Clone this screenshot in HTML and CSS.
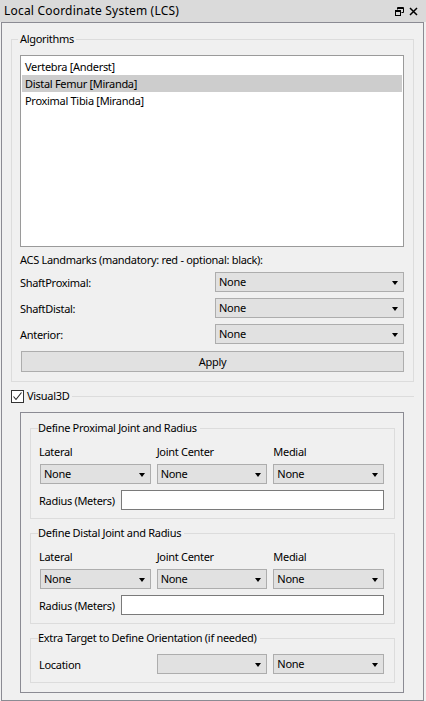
FILE: index.html
```html
<!DOCTYPE html>
<html lang="en">
<head>
<meta charset="UTF-8" />
<title>Local Coordinate System (LCS)</title>
<link rel="stylesheet" href="styles.css">
</head>
<body>
<div class="titlebar">
  <span class="title">Local Coordinate System (LCS)</span>
  <span class="title-buttons">
    <svg class="tb-icon" width="9" height="9" viewBox="0 0 9 9">
      <path d="M2.5 0.5h6v5h-2 M2.5 0.5v2 M2.5 1.5h6" fill="none" stroke="#000" stroke-width="1"/>
      <rect x="0.5" y="3.5" width="5" height="5" fill="none" stroke="#000"/>
      <path d="M0.5 4.5h5" stroke="#000"/>
    </svg>
    <svg class="tb-icon" width="9" height="9" viewBox="0 0 9 9">
      <path d="M1 1L8 8M8 1L1 8" stroke="#000" stroke-width="1.5"/>
    </svg>
  </span>
</div>

<div class="dock">
  <fieldset class="group algorithms">
    <legend>Algorithms</legend>
    <div class="list">
      <div class="list-item">Vertebra [Anderst]</div>
      <div class="list-item selected">Distal Femur [Miranda]</div>
      <div class="list-item">Proximal Tibia [Miranda]</div>
    </div>
    <div class="acs-label">ACS Landmarks (mandatory: red - optional: black):</div>
    <div class="landmark-row">
      <span class="row-label">ShaftProximal:</span>
      <div class="combo wide">None</div>
    </div>
    <div class="landmark-row">
      <span class="row-label">ShaftDistal:</span>
      <div class="combo wide">None</div>
    </div>
    <div class="landmark-row">
      <span class="row-label">Anterior:</span>
      <div class="combo wide">None</div>
    </div>
    <div class="button">Apply</div>
  </fieldset>

  <fieldset class="visual3d">
    <legend>
      <span class="checkbox">
        <svg width="11" height="11" viewBox="0 0 11 11">
          <path d="M1.5 5.5L4 8.5L9.5 1.5" fill="none" stroke="#222" stroke-width="1.1"/>
        </svg>
      </span>
      <span>Visual3D</span>
    </legend>
    <div class="box">
      <fieldset class="group sub">
        <legend>Define Proximal Joint and Radius</legend>
        <div class="cols labels">
          <span>Lateral</span><span>Joint Center</span><span>Medial</span>
        </div>
        <div class="cols">
          <div class="combo">None</div><div class="combo">None</div><div class="combo">None</div>
        </div>
        <div class="radius-row">
          <span class="radius-label">Radius (Meters)</span>
          <div class="input"></div>
        </div>
      </fieldset>

      <fieldset class="group sub">
        <legend>Define Distal Joint and Radius</legend>
        <div class="cols labels">
          <span>Lateral</span><span>Joint Center</span><span>Medial</span>
        </div>
        <div class="cols">
          <div class="combo">None</div><div class="combo">None</div><div class="combo">None</div>
        </div>
        <div class="radius-row">
          <span class="radius-label">Radius (Meters)</span>
          <div class="input"></div>
        </div>
      </fieldset>

      <fieldset class="group sub extra">
        <legend>Extra Target to Define Orientation (if needed)</legend>
        <div class="cols">
          <span class="location-label">Location</span>
          <div class="combo"></div><div class="combo">None</div>
        </div>
      </fieldset>
    </div>
  </fieldset>
</div>
</body>
</html>
```
FILE: styles.css
```css
* {
  box-sizing: border-box;
}
body {
  margin: 0;
  background: #f0f0f0;
  font-family: "Noto Sans", "Liberation Sans", sans-serif;
  font-size: 11px;
  letter-spacing: -0.3px;
  color: #000;
  width: 426px;
  height: 701px;
  overflow: hidden;
}
.titlebar {
  height: 22px;
  background: #dadada;
  display: flex;
  align-items: center;
  justify-content: space-between;
  padding: 0 8px 0 4px;
}
.title {
  font-size: 12px;
  letter-spacing: 0.2px;
  line-height: 16px;
}
.title-buttons {
  display: flex;
  gap: 5px;
}
.tb-icon {
  display: block;
}
.dock {
  margin-left: 1px;
  width: 423px;
  height: 679px;
  border: 1px solid #8b8b93;
  background: #f0f0f0;
  padding: 9px 9px 0 9px;
}
fieldset {
  margin: 0;
  min-width: 0;
}
legend {
  line-height: 14px;
  padding: 0 2px;
}
.group {
  border: 1px solid #dcdcdc;
}
.algorithms {
  padding: 0 9px 9px 8px;
}
.algorithms legend {
  margin-left: -2px;
}
.list {
  margin-top: 9px;
  height: 192px;
  background: #fff;
  border: 1px solid #9a9a9a;
  padding: 2px 1px;
}
.list-item {
  height: 17px;
  line-height: 17px;
  padding-left: 3px;
}
.list-item.selected {
  background: #cdcdcd;
}
.acs-label {
  margin-top: 5px;
  height: 16px;
  line-height: 16px;
}
.landmark-row {
  display: flex;
  justify-content: space-between;
  align-items: center;
  margin-top: 6px;
}
.acs-label + .landmark-row {
  margin-top: 4px;
}
.combo {
  position: relative;
  height: 20px;
  line-height: 18px;
  background: #e1e1e1;
  border: 1px solid #adadad;
  padding-left: 3px;
}
.combo::after {
  content: "";
  position: absolute;
  right: 5px;
  top: 8px;
  border-left: 3.5px solid transparent;
  border-right: 3.5px solid transparent;
  border-top: 4px solid #000;
}
.combo.wide {
  width: 189px;
}
.button {
  margin: 7px 0 0 1px;
  height: 21px;
  line-height: 19px;
  text-align: center;
  background: #e1e1e1;
  border: 1px solid #adadad;
}
.visual3d {
  border: none;
  border-top: 1px solid #dcdcdc;
  margin-top: 7px;
  padding: 9px 10px 0 0;
}
.visual3d legend {
  padding: 0 3px 0 0;
  display: flex;
  align-items: center;
  gap: 3px;
}
.checkbox {
  width: 13px;
  height: 13px;
  border: 1px solid #333;
  background: #fff;
  display: flex;
  align-items: center;
  justify-content: center;
}
.box {
  margin-left: 9px;
  height: 281px;
  border: 1px solid #8b8b93;
  padding: 8px 8px 0 9px;
}
.sub {
  padding: 0 10px 8px 9px;
}
.sub + .sub {
  margin-top: 7px;
}
.sub legend {
  margin-left: -2px;
}
.cols {
  display: grid;
  grid-template-columns: 1fr 1fr 1fr;
  column-gap: 6px;
  align-items: center;
}
.cols.labels {
  margin-top: 9px;
  height: 16px;
  line-height: 16px;
  margin-bottom: 4px;
}
.cols.labels span:first-child {
  margin-left: -1px;
}
.radius-row {
  display: flex;
  align-items: center;
  margin-top: 6px;
}
.radius-label {
  flex: none;
  white-space: nowrap;
  width: 82px;
  margin-left: -1px;
}
.input {
  flex: 1;
  height: 20px;
  background: #fff;
  border: 1px solid #7a7a7a;
}
.extra .cols {
  margin-top: 9px;
}
.location-label {
  margin-left: -1px;
}
```
